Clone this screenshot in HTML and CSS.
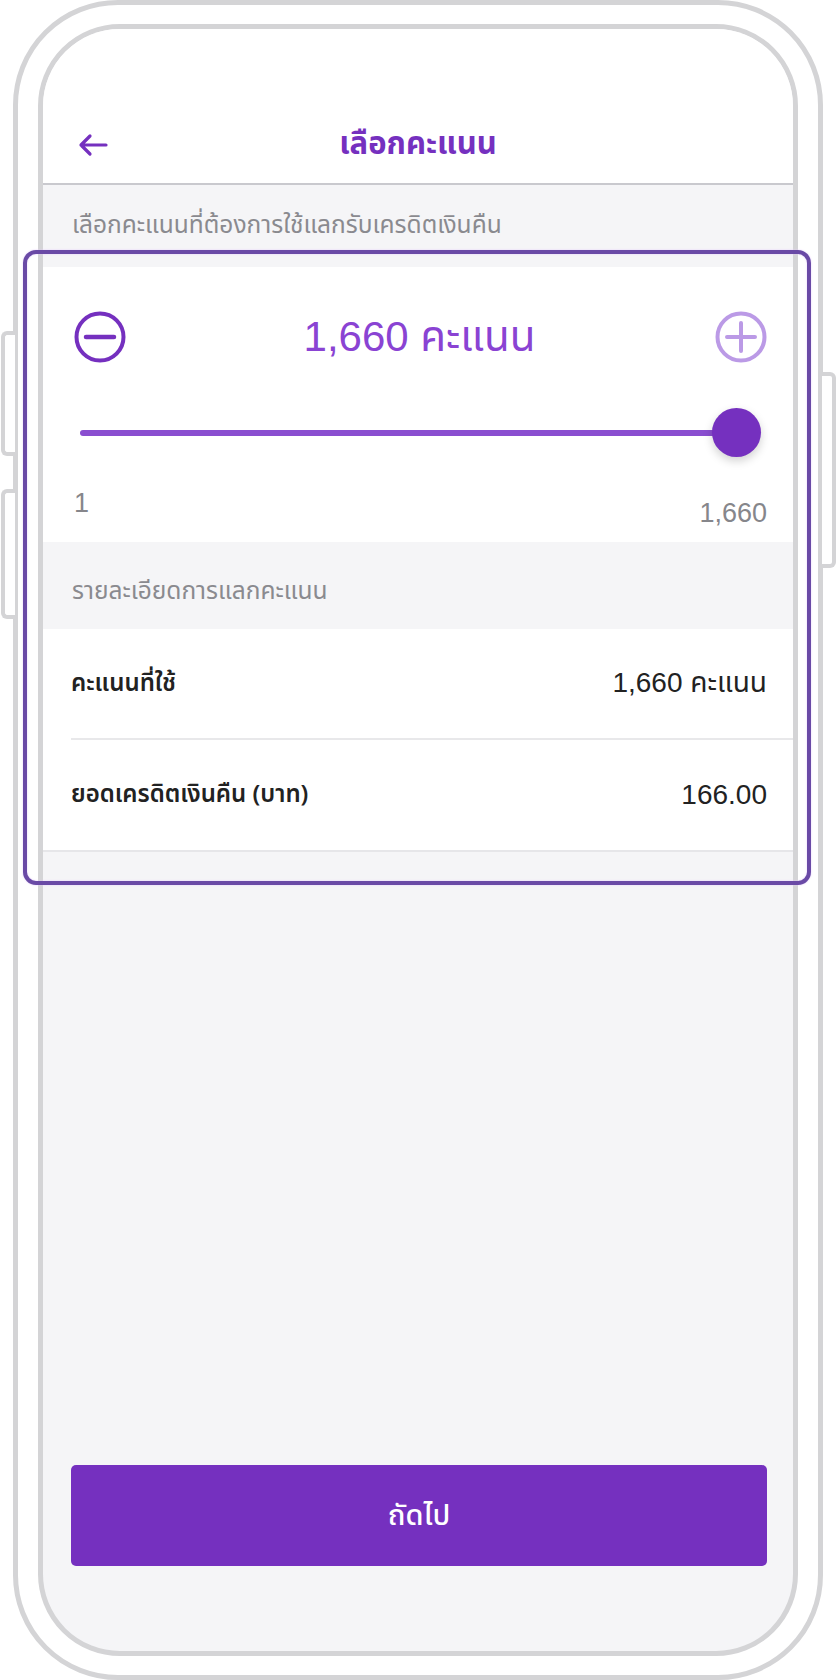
FILE: index.html
```html
<!DOCTYPE html>
<html lang="th">
<head>
    <meta charset="UTF-8" />
    <meta name="viewport" content="width=device-width, initial-scale=1.0" />
    <title>เลือกคะแนน</title>
    <link rel="stylesheet" href="styles.css">
</head>
<body>

    <div class="device">
        <!-- hardware buttons -->
        <span class="side-btn side-left top"></span>
        <span class="side-btn side-left bottom"></span>
        <span class="side-btn side-right"></span>

        <div class="frame">
            <div class="screen">

                <!-- Top bar -->
                <header class="topbar">
                    <svg class="back" width="30" height="24" viewBox="0 0 30 24">
                        <path d="M28 12H3M12 3L3 12l9 9" fill="none" stroke="#7530bf" stroke-width="3.2" stroke-linecap="round" stroke-linejoin="round" />
                    </svg>
                    <h1 class="title">เลือกคะแนน</h1>
                    <span></span>
                </header>

                <p class="section-label intro">เลือกคะแนนที่ต้องการใช้แลกรับเครดิตเงินคืน</p>

                <!-- Points picker -->
                <section class="picker">
                    <div class="stepper">
                        <svg class="step-icon" width="52" height="52" viewBox="0 0 52 52">
                            <circle cx="26" cy="26" r="23.5" fill="none" stroke="#7530bf" stroke-width="4" />
                            <path d="M12 26h28" stroke="#7530bf" stroke-width="4.5" stroke-linecap="round" />
                        </svg>
                        <div class="amount">1,660 คะแนน</div>
                        <svg class="step-icon" width="52" height="52" viewBox="0 0 52 52">
                            <circle cx="26" cy="26" r="23.5" fill="none" stroke="#bb9ae6" stroke-width="4" />
                            <path d="M12 26h28M26 12v28" stroke="#bb9ae6" stroke-width="4" stroke-linecap="round" />
                        </svg>
                    </div>

                    <div class="slider">
                        <div class="track"></div>
                        <div class="knob"></div>
                    </div>

                    <div class="range">
                        <span>1</span>
                        <span class="range-max">1,660</span>
                    </div>
                </section>

                <p class="section-label">รายละเอียดการแลกคะแนน</p>

                <!-- Summary -->
                <section class="details">
                    <div class="row">
                        <span class="row-label">คะแนนที่ใช้</span>
                        <span class="row-value">1,660 คะแนน</span>
                    </div>
                    <div class="row">
                        <span class="row-label">ยอดเครดิตเงินคืน (บาท)</span>
                        <span class="row-value">166.00</span>
                    </div>
                </section>

                <div class="spacer"></div>

                <button class="next">ถัดไป</button>
            </div>
        </div>

        <!-- highlight box drawn over the picker and summary -->
        <div class="highlight"></div>
    </div>

</body>
</html>
```

FILE: styles.css
```css
* {
    margin: 0;
    padding: 0;
    box-sizing: border-box;
}

html, body {
    background: #fff;
    font-family: "Noto Sans Thai", "Noto Sans", "Liberation Sans", sans-serif;
    color: #222;
}

.device {
    position: relative;
    width: 837px;
    height: 1680px;
}

.frame {
    margin-left: 13px;
    width: 810px;
    height: 1680px;
    border: 5px solid #d4d4d6;
    border-radius: 105px;
    padding: 19px 20px;
    background: #fff;
}

.side-btn {
    position: absolute;
    width: 14px;
    background: #fff;
    border: 4px solid #d4d4d6;
}

.side-left {
    left: 1px;
    border-right: none;
    border-radius: 6px 0 0 6px;
}

    .side-left.top {
        top: 331px;
        height: 125px;
    }

    .side-left.bottom {
        top: 489px;
        height: 130px;
    }

.side-right {
    left: 822px;
    top: 372px;
    height: 196px;
    border-left: none;
    border-radius: 0 6px 6px 0;
}

.screen {
    width: 760px;
    height: 1632px;
    border: 5px solid #d4d4d6;
    border-radius: 82px;
    background: #f5f5f7;
    overflow: hidden;
    display: flex;
    flex-direction: column;
}

/* top bar */
.topbar {
    background: #fff;
    display: grid;
    grid-template-columns: 1fr auto 1fr;
    align-items: center;
    height: 156px;
    padding: 94px 35px 17px;
    border-bottom: 2px solid #c9c9ce;
}

.back {
    display: block;
}

.title {
    font-size: 31px;
    font-weight: 700;
    color: #7530bf;
    line-height: 44px;
}

.section-label {
    font-size: 24.5px;
    line-height: 30px;
    color: #8a8a8f;
    padding: 35px 29px 22px;
}

    .section-label.intro {
        padding: 26px 29px 26px;
    }

/* picker */
.picker {
    background: #fff;
    padding: 44px 26px 14px 31px;
}

.stepper {
    display: flex;
    align-items: center;
    justify-content: space-between;
}

.step-icon {
    display: block;
}

.amount {
    font-family: "Liberation Sans", "Noto Sans Thai", "Noto Sans", sans-serif;
    font-size: 42px;
    line-height: 52px;
    color: #8a43d3;
    padding-right: 2px;
}

.slider {
    display: flex;
    align-items: center;
    margin: 45px 6px 0 6px;
}

.track {
    flex: 1;
    height: 6px;
    border-radius: 3px;
    background: #8a4ed0;
}

.knob {
    width: 49px;
    height: 49px;
    margin-left: -12px;
    border-radius: 50%;
    background: #7530bf;
    box-shadow: 0 4px 10px rgba(0, 0, 0, 0.18);
}

.range {
    display: flex;
    justify-content: space-between;
    align-items: flex-start;
    margin-top: 31px;
    font-family: "Liberation Sans", sans-serif;
    font-size: 27px;
    line-height: 30px;
    color: #86868b;
}

.range-max {
    margin-top: 10px;
}

/* summary rows */
.details {
    background: #fff;
    border-bottom: 2px solid #e6e6e9;
}

.row {
    display: flex;
    justify-content: space-between;
    align-items: center;
    height: 111px;
    margin-left: 28px;
    padding-right: 26px;
    border-bottom: 2px solid #e8e8ea;
}

    .row:last-child {
        border-bottom: none;
        height: 110px;
    }

.row-label {
    font-size: 24px;
    font-weight: 600;
    color: #222;
}

.row-value {
    font-family: "Liberation Sans", "Noto Sans Thai", "Noto Sans", sans-serif;
    font-size: 28px;
    color: #222;
}

.spacer {
    flex: 1;
}

.next {
    margin: 0 26px 85px 28px;
    height: 101px;
    border: none;
    border-radius: 5px;
    background: #7530bf;
    color: #fff;
    font-family: inherit;
    font-size: 29px;
    font-weight: 500;
}

.highlight {
    position: absolute;
    left: 23px;
    top: 250px;
    width: 788px;
    height: 635px;
    border: 4px solid #6a4aa6;
    border-radius: 13px;
    box-shadow: 0 0 2px #e3c9ff, inset 0 0 2px #e3c9ff;
}
```
